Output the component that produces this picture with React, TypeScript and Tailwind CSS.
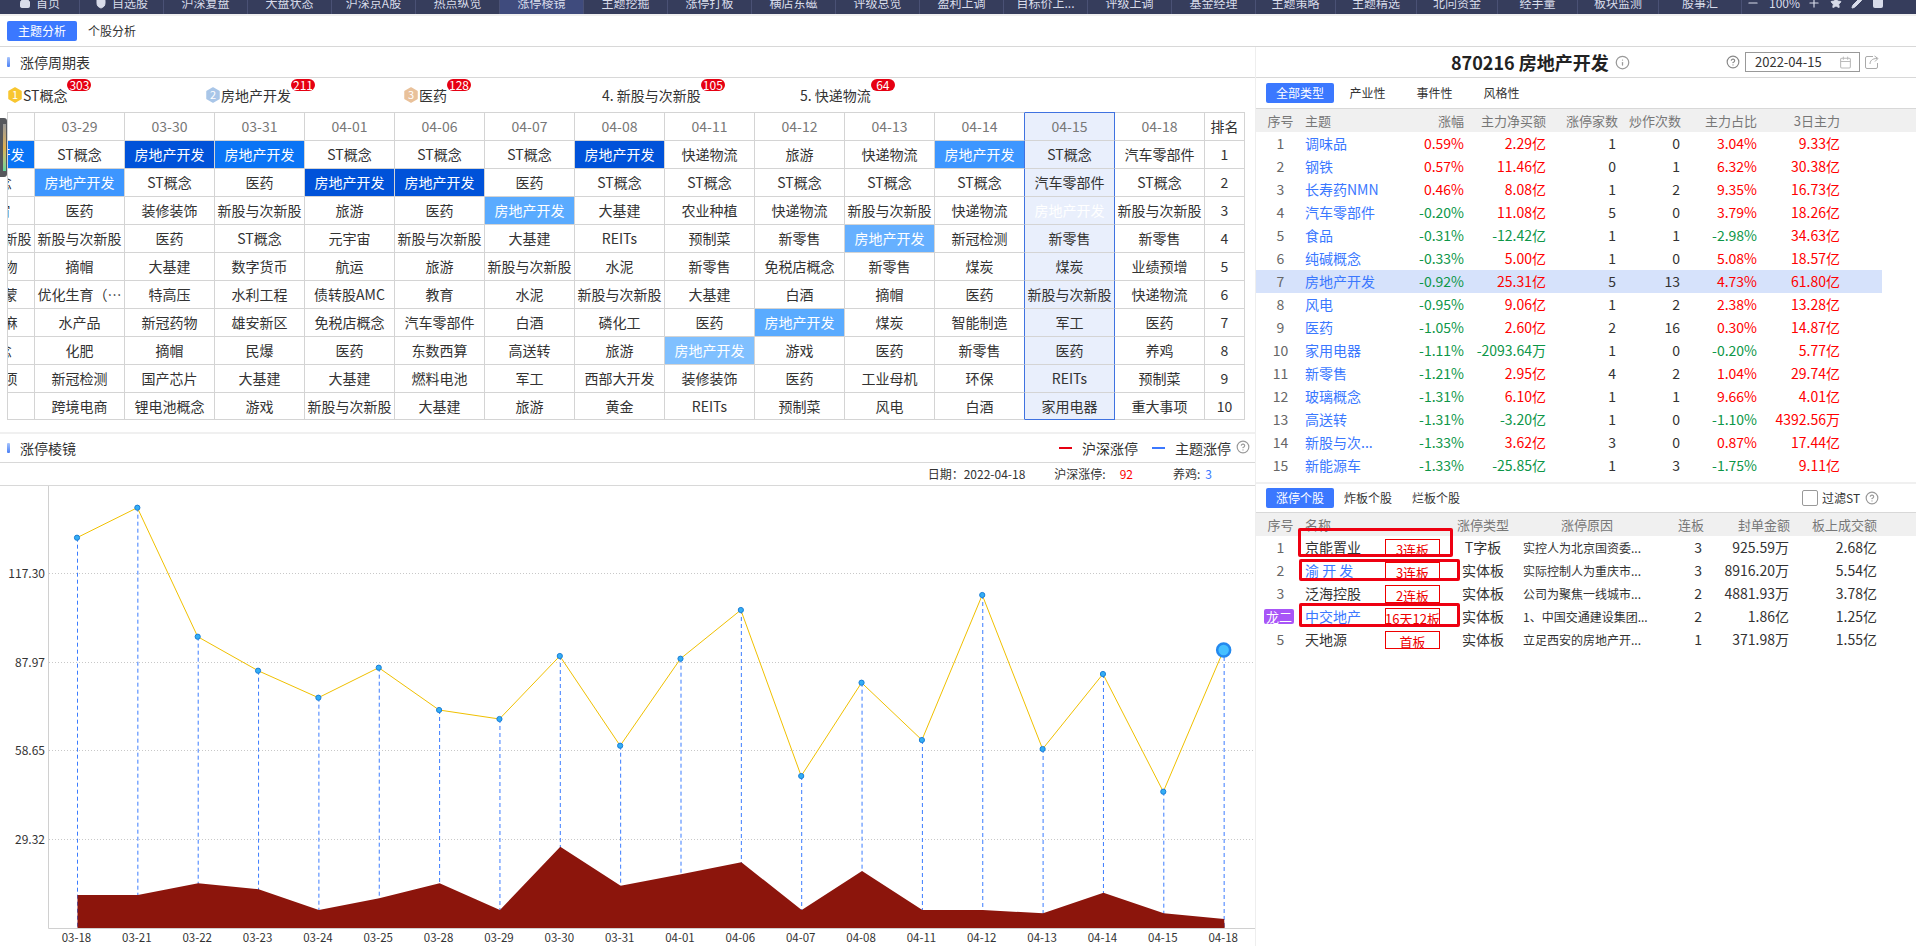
import { Calendar, CircleHelp, Home, Info, Minus, PanelTop, Pencil, Plus, Shield, Star } from "lucide-react";

const navItems = [
  { label: "首页", w: "w-[80px]" },
  { label: "自选股", w: "w-[84px]" },
  { label: "沪深复盘", w: "w-[84px]" },
  { label: "大盘状态", w: "w-[84px]" },
  { label: "沪深京A股", w: "w-[84px]" },
  { label: "热点纵览", w: "w-[84px]" },
  { label: "涨停棱镜", w: "w-[84px]" },
  { label: "主题挖掘", w: "w-[84px]" },
  { label: "涨停打板", w: "w-[84px]" },
  { label: "横店东磁", w: "w-[84px]" },
  { label: "评级总览", w: "w-[84px]" },
  { label: "盈利上调", w: "w-[84px]" },
  { label: "目标价上...", w: "w-[84px]" },
  { label: "评级上调", w: "w-[84px]" },
  { label: "基金经理", w: "w-[84px]" },
  { label: "主题策略", w: "w-[80px]" },
  { label: "主题精选", w: "w-[81px]" },
  { label: "北向资金", w: "w-[81px]" },
  { label: "经手量", w: "w-[80px]" },
  { label: "板块监测", w: "w-[81px]" },
  { label: "股事汇", w: "w-[83px]" },
];

const dates = ["03-28", "03-29", "03-30", "03-31", "04-01", "04-06", "04-07", "04-08", "04-11", "04-12", "04-13", "04-14", "04-15", "04-18"];

const cycle = [
  ["房地产开发", "ST概念", "房地产开发", "房地产开发", "ST概念", "ST概念", "ST概念", "房地产开发", "快递物流", "旅游", "快递物流", "房地产开发", "ST概念", "汽车零部件"],
  ["ST概念", "房地产开发", "ST概念", "医药", "房地产开发", "房地产开发", "医药", "ST概念", "ST概念", "ST概念", "ST概念", "ST概念", "汽车零部件", "ST概念"],
  ["元宇宙", "医药", "装修装饰", "新股与次新股", "旅游", "医药", "房地产开发", "大基建", "农业种植", "快递物流", "新股与次新股", "快递物流", "房地产开发", "新股与次新股"],
  ["新股与次新股", "新股与次新股", "医药", "ST概念", "元宇宙", "新股与次新股", "大基建", "REITs", "预制菜", "新零售", "房地产开发", "新冠检测", "新零售", "新零售"],
  ["新冠药物", "摘帽", "大基建", "数字货币", "航运", "旅游", "新股与次新股", "水泥", "新零售", "免税店概念", "新零售", "煤炭", "煤炭", "业绩预增"],
  ["区域内蒙", "优化生育（…", "特高压", "水利工程", "债转股AMC", "教育", "水泥", "新股与次新股", "大基建", "白酒", "摘帽", "医药", "新股与次新股", "快递物流"],
  ["工业大麻", "水产品", "新冠药物", "雄安新区", "免税店概念", "汽车零部件", "白酒", "磷化工", "医药", "房地产开发", "煤炭", "智能制造", "军工", "医药"],
  ["ST概念", "化肥", "摘帽", "民爆", "医药", "东数西算", "高送转", "旅游", "房地产开发", "游戏", "医药", "新零售", "医药", "养鸡"],
  ["重大事项", "新冠检测", "国产芯片", "大基建", "大基建", "燃料电池", "军工", "西部大开发", "装修装饰", "医药", "工业母机", "环保", "REITs", "预制菜"],
  ["", "跨境电商", "锂电池概念", "游戏", "新股与次新股", "大基建", "旅游", "黄金", "REITs", "预制菜", "风电", "白酒", "家用电器", "重大事项"],
];

// row-col -> heat colour of the 房地产开发 cell
const heat: Record<string, string> = {
  "0-0": "bg-[#0a74f5] text-white",
  "1-1": "bg-[#3d96ff] text-white",
  "0-2": "bg-[#0052d9] text-white",
  "0-3": "bg-[#0a74f5] text-white",
  "1-4": "bg-[#0052d9] text-white",
  "1-5": "bg-[#0052d9] text-white",
  "2-6": "bg-[#5aabff] text-white",
  "0-7": "bg-[#0052d9] text-white",
  "7-8": "bg-[#80c0ff] text-white",
  "6-9": "bg-[#5aabff] text-white",
  "3-10": "bg-[#66b0ff] text-white",
  "0-11": "bg-[#3d96ff] text-white",
  "2-12": "bg-[#5aabff] text-white",
};

const legend = [
  { medal: "#f8c630", n: "1", name: "ST概念", count: "303" },
  { medal: "#a9c6e8", n: "2", name: "房地产开发", count: "211" },
  { medal: "#e9c19a", n: "3", name: "医药", count: "128" },
  { name: "4. 新股与次新股", count: "105" },
  { name: "5. 快递物流", count: "64" },
];

type Theme = [string, string, string, string, string, string, string];

const themes: Theme[] = [
  ["调味品", "0.59%", "2.29亿", "1", "0", "3.04%", "9.33亿"],
  ["钢铁", "0.57%", "11.46亿", "0", "1", "6.32%", "30.38亿"],
  ["长寿药NMN", "0.46%", "8.08亿", "1", "2", "9.35%", "16.73亿"],
  ["汽车零部件", "-0.20%", "11.08亿", "5", "0", "3.79%", "18.26亿"],
  ["食品", "-0.31%", "-12.42亿", "1", "1", "-2.98%", "34.63亿"],
  ["纯碱概念", "-0.33%", "5.00亿", "1", "0", "5.08%", "18.57亿"],
  ["房地产开发", "-0.92%", "25.31亿", "5", "13", "4.73%", "61.80亿"],
  ["风电", "-0.95%", "9.06亿", "1", "2", "2.38%", "13.28亿"],
  ["医药", "-1.05%", "2.60亿", "2", "16", "0.30%", "14.87亿"],
  ["家用电器", "-1.11%", "-2093.64万", "1", "0", "-0.20%", "5.77亿"],
  ["新零售", "-1.21%", "2.95亿", "4", "2", "1.04%", "29.74亿"],
  ["玻璃概念", "-1.31%", "6.10亿", "1", "1", "9.66%", "4.01亿"],
  ["高送转", "-1.31%", "-3.20亿", "1", "0", "-1.10%", "4392.56万"],
  ["新股与次...", "-1.33%", "3.62亿", "3", "0", "0.87%", "17.44亿"],
  ["新能源车", "-1.33%", "-25.85亿", "1", "3", "-1.75%", "9.11亿"],
];

const stocks = [
  { no: "1", name: "京能置业", badge: "3连板", type: "T字板", reason: "实控人为北京国资委...", days: "3", seal: "925.59万", vol: "2.68亿" },
  { no: "2", name: "渝 开 发", blue: true, badge: "3连板", type: "实体板", reason: "实际控制人为重庆市...", days: "3", seal: "8916.20万", vol: "5.54亿" },
  { no: "3", name: "泛海控股", badge: "2连板", type: "实体板", reason: "公司为聚焦一线城市...", days: "2", seal: "4881.93万", vol: "3.78亿" },
  { no: "龙二", name: "中交地产", blue: true, badge: "16天12板", type: "实体板", reason: "1、中国交通建设集团...", days: "2", seal: "1.86亿", vol: "1.25亿" },
  { no: "5", name: "天地源", badge: "首板", type: "实体板", reason: "立足西安的房地产开...", days: "1", seal: "371.98万", vol: "1.55亿" },
];

// chart points in page pixels
const linePts = [537.7, 507.7, 636.7, 670.7, 697.7, 667.7, 710, 719, 656, 745.7, 658.7, 610, 776, 682.7, 740, 595, 749, 674, 791.7, 650];
const areaPts = [895, 895, 883.3, 889.3, 910, 898.3, 883.3, 910, 846.7, 885.7, 874.3, 862.3, 910, 871, 910, 910, 913.3, 892.7, 913.3, 919];
const xLabels = ["03-18", "03-21", "03-22", "03-23", "03-24", "03-25", "03-28", "03-29", "03-30", "03-31", "04-01", "04-06", "04-07", "04-08", "04-11", "04-12", "04-13", "04-14", "04-15", "04-18"];
const yTicks = [
  { y: 573.5, label: "117.30" },
  { y: 662.5, label: "87.97" },
  { y: 750.5, label: "58.65" },
  { y: 839.5, label: "29.32" },
];
const TOP = 486;
const px = (i: number) => 77 + 60.35 * i;

const pctColor = (v: string) => (v.startsWith("-") ? "text-[#0d9648]" : "text-[#ff0000]");

function Medal({ color, n }: { color: string; n: string }) {
  return (
    <svg width="14" height="16" viewBox="0 0 14 16" className="mr-[1px] shrink-0">
      <path d="M7 1 L13 4.5 L13 11.5 L7 15 L1 11.5 L1 4.5 Z" fill={color} stroke={color} strokeWidth="1.5" strokeLinejoin="round" />
      <text x="7" y="12" textAnchor="middle" fontSize="11" fill="#fff">
        {n}
      </text>
    </svg>
  );
}

function SectionTitle({ title }: { title: string }) {
  return (
    <div className="flex items-center">
      <span className="ml-[7px] h-[10px] w-[3px] rounded-[1px] bg-linear-to-b from-[#a9c4fb] to-[#4a7ff5]" />
      <span className="ml-[10px] text-[14px] text-[#333]">{title}</span>
    </div>
  );
}

function ChartPanel() {
  const line = linePts.map((y, i) => `${px(i)},${y - TOP}`).join(" ");
  const area = `${px(0) + 0.5},${928 - TOP} ` + areaPts.map((y, i) => `${px(i) + 0.5},${y - TOP}`).join(" ") + ` ${px(19) + 1},${928 - TOP}`;
  return (
    <svg width="1255" height="460" className="block">
      <path d={`M48.5 0 V${928.5 - TOP} H1255`} fill="none" stroke="#d0d0d0" />
      {yTicks.map((t) => (
        <g key={t.label}>
          <line x1="49" x2="1255" y1={t.y - TOP} y2={t.y - TOP} stroke="#c8c8c8" strokeDasharray="1 2" />
          <text x="45" y={t.y - TOP + 4} textAnchor="end" fontSize="12" fill="#333">
            {t.label}
          </text>
        </g>
      ))}
      {linePts.map((y, i) => (
        <line key={i} x1={px(i) + 0.5} x2={px(i) + 0.5} y1={y - TOP} y2={928 - TOP} stroke="#3b7cff" strokeDasharray="4 3" />
      ))}
      <polygon points={area} fill="#8c150c" />
      <polyline points={line} fill="none" stroke="#f0c000" />
      {linePts.slice(0, 19).map((y, i) => (
        <circle key={i} cx={px(i)} cy={y - TOP} r="2.6" fill="#33aef5" stroke="#1c7ed6" />
      ))}
      <circle cx={px(19)} cy={650 - TOP} r="6.5" fill="#45c0ff" stroke="#2489ef" strokeWidth="2.5" />
      {xLabels.map((d, i) => (
        <text key={d} x={px(i) - 0.5} y={942 - TOP} textAnchor="middle" fontSize="11.5" fill="#333">
          {d}
        </text>
      ))}
    </svg>
  );
}

export default function App() {
  return (
    <div className="relative h-[946px] w-[1916px] overflow-hidden bg-white font-['Noto_Sans_CJK_SC','Noto_Sans',sans-serif] text-[#333]">
      {/* top nav, page is scrolled so only the lower half shows */}
      <div className="h-[14px] overflow-hidden bg-[#363d5c]">
        <div className="-mt-[11px] flex h-[28px] items-center text-[12px] text-[#d8dcea]">
          {navItems.map((item, i) => (
            <div key={item.label} className={`flex h-full shrink-0 items-center justify-center gap-[5px] border-r border-[#4a5175] ${item.w} ${i === 6 ? "bg-[#3f4b7d]" : ""}`}>
              {i === 0 && <Home size={12} fill="#d8dcea" />}
              {i === 1 && <Shield size={12} fill="#d8dcea" />}
              {item.label}
            </div>
          ))}
          <div className="flex items-center pl-[4px] text-[#d8dcea]">
            <Minus size={14} />
            <span className="ml-[9px] text-[12px]">100%</span>
            <Plus size={14} className="ml-[7px]" />
            <Star size={12} fill="#d8dcea" className="ml-[9px]" />
            <Pencil size={12} fill="#d8dcea" className="ml-[9px]" />
            <PanelTop size={12} fill="#d8dcea" className="ml-[9px]" />
          </div>
        </div>
      </div>
      <div className="h-[2px] bg-[#f0f0f0]" />

      <div className="flex h-[31px] items-center gap-[11px] border-b border-[#d8d8d8] pl-[7px] text-[12px]">
        <div className="flex h-[20px] w-[70px] items-center justify-center rounded-[2px] bg-[#3b78ff] text-white">主题分析</div>
        <div>个股分析</div>
      </div>

      <div className="flex">
        {/* left column */}
        <div className="w-[1256px] shrink-0 border-r border-[#eeeeee]">
          <div className="flex h-[31px] items-center border-b border-[#d8d8d8]">
            <SectionTitle title="涨停周期表" />
          </div>
          <div className="flex h-[34px] items-center pl-[8px] text-[14px]">
            {legend.map((l) => (
              <div key={l.name} className="flex w-[198px] shrink-0 items-center">
                <div className="relative flex items-center leading-[20px]">
                  {l.medal && <Medal color={l.medal} n={l.n ?? ""} />}
                  <span>{l.name}</span>
                  <span className="absolute -top-[6px] left-full flex h-[12px] min-w-[24px] items-center justify-center rounded-[6px] bg-[#e60012] px-[1px] text-[12px] text-white">
                    {l.count}
                  </span>
                </div>
              </div>
            ))}
          </div>

          <div className="ml-[7px] w-[1238px] overflow-hidden border-l border-[#d4d4d4]">
            <table className="-ml-[63px] w-[1300px] table-fixed border-separate border-spacing-0 text-center text-[14px]">
              <colgroup>
                {dates.map((d) => (
                  <col key={d} className="w-[90px]" />
                ))}
                <col className="w-[40px]" />
              </colgroup>
              <thead>
                <tr>
                  {dates.map((d, c) => (
                    <th
                      key={d}
                      className={`h-[29px] border-t border-r border-b border-[#d4d4d4] text-[14px] font-normal text-[#777] ${c === 12 ? "border-t-[#3f72e0] border-r-[#3f72e0] bg-[#e9effc]" : ""} ${c === 11 ? "border-r-[#3f72e0]" : ""}`}
                    >
                      {d}
                    </th>
                  ))}
                  <th className="border-t border-r border-b border-[#d4d4d4] font-normal">排名</th>
                </tr>
              </thead>
              <tbody>
                {cycle.map((row, r) => (
                  <tr key={r} className={r === 9 ? "h-[27px]" : "h-[28px]"}>
                    {row.map((name, c) => (
                      <td
                        key={c}
                        className={`overflow-hidden border-r border-b border-[#d4d4d4] whitespace-nowrap ${c === 12 ? "border-r-[#3f72e0] bg-[#e9effc]" : ""} ${c === 11 ? "border-r-[#3f72e0]" : ""} ${c === 12 && r === 9 ? "border-b-[#3f72e0]" : ""} ${heat[`${r}-${c}`] ?? ""}`}
                      >
                        {name}
                      </td>
                    ))}
                    <td className="border-r border-b border-[#d4d4d4]">{r + 1}</td>
                  </tr>
                ))}
              </tbody>
            </table>
          </div>

          <div className="mt-[12px] h-[2px] bg-[#f0f0f0]" />

          <div className="flex h-[29px] items-center justify-between border-b border-[#d8d8d8]">
            <SectionTitle title="涨停棱镜" />
            <div className="flex items-center pr-[5px] text-[14px]">
              <span className="h-[2px] w-[13px] bg-[#e60012]" />
              <span className="ml-[10px]">沪深涨停</span>
              <span className="ml-[14px] h-[2px] w-[13px] bg-[#3b78ff]" />
              <span className="ml-[10px]">主题涨停</span>
              <CircleHelp size={14} className="mb-[2px] ml-[5px] text-[#999]" />
            </div>
          </div>
          <div className="flex h-[23px] items-center justify-end border-b border-[#d8d8d8] pr-[43px] text-[12px]">
            <span>日期：2022-04-18</span>
            <span className="ml-[29px]">沪深涨停:</span>
            <span className="ml-[14px] text-[#ff0000]">92</span>
            <span className="ml-[40px]">养鸡:</span>
            <span className="ml-[5px] text-[#3b78ff]">3</span>
          </div>
          <ChartPanel />
        </div>

        {/* right column */}
        <div className="w-[660px] shrink-0">
          <div className="flex h-[31px] items-center border-b border-[#d8d8d8] pl-[195px] pr-[36px]">
            <span className="text-[18px] font-bold text-[#222]">870216 房地产开发</span>
            <Info size={15} className="ml-[6px] text-[#999]" />
            <CircleHelp size={14} className="ml-auto text-[#888]" />
            <div className="ml-[5px] flex h-[20px] w-[115px] items-center justify-between border border-[#999] pr-[7px] pl-[9px] text-[13px]">
              <span>2022-04-15</span>
              <Calendar size={13} className="text-[#bbb]" />
            </div>
            <svg width="16" height="16" viewBox="0 0 16 16" fill="none" stroke="#aaa" className="ml-[4px]">
              <path d="M9 2.5 H3 a1.5 1.5 0 0 0 -1.5 1.5 v9 a1.5 1.5 0 0 0 1.5 1.5 h9 a1.5 1.5 0 0 0 1.5 -1.5 v-4" />
              <path d="M6 10 c0 -3 2 -5.5 7 -5.5 M10.5 2 L14 4.5 L11 7.5" />
            </svg>
          </div>

          <div className="flex h-[31px] items-center border-b border-[#d8d8d8] pl-[10px] text-[12px]">
            <div className="flex h-[20px] w-[68px] items-center justify-center rounded-[2px] bg-[#3b78ff] text-white">全部类型</div>
            <div className="w-[67px] text-center">产业性</div>
            <div className="w-[67px] text-center">事件性</div>
            <div className="w-[67px] text-center">风格性</div>
          </div>

          <div className="w-[660px]">
            <div className="grid h-[23px] grid-cols-[49px_90px_69px_82px_72px_63px_76px_83px_76px] items-center bg-[#f0f0f0] text-[13px] whitespace-nowrap text-[#777]">
              <span className="text-center">序号</span>
              <span>主题</span>
              <span className="text-right">涨幅</span>
              <span className="text-right">主力净买额</span>
              <span className="text-right">涨停家数</span>
              <span className="text-right">炒作次数</span>
              <span className="text-right">主力占比</span>
              <span className="text-right">3日主力</span>
            </div>
            {themes.map((t, i) => (
              <div key={t[0]} className={`grid h-[23px] w-[626px] grid-cols-[49px_90px_69px_82px_72px_63px_76px_83px_42px] items-center text-[14px] whitespace-nowrap ${i === 6 ? "bg-[#d6e2fb]" : ""}`}>
                <span className="text-center text-[#666]">{i + 1}</span>
                <span className="text-[#3b78ff]">{t[0]}</span>
                <span className={`text-right ${pctColor(t[1])}`}>{t[1]}</span>
                <span className={`text-right ${pctColor(t[2])}`}>{t[2]}</span>
                <span className="pr-[2px] text-right">{t[3]}</span>
                <span className="pr-[1px] text-right">{t[4]}</span>
                <span className={`text-right ${pctColor(t[5])}`}>{t[5]}</span>
                <span className={`text-right ${pctColor(t[6])}`}>{t[6]}</span>
              </div>
            ))}
          </div>

          <div className="mt-[5px] h-[2px] bg-[#f0f0f0]" />
          <div className="flex h-[29px] items-center border-b border-[#d8d8d8] pl-[10px] text-[12px]">
            <div className="flex h-[20px] w-[68px] items-center justify-center rounded-[2px] bg-[#3b78ff] text-white">涨停个股</div>
            <div className="w-[68px] text-center">炸板个股</div>
            <div className="w-[68px] text-center">烂板个股</div>
            <span className="ml-[332px] h-[16px] w-[16px] rounded-[2px] border border-[#999]" />
            <span className="ml-[4px]">过滤ST</span>
            <CircleHelp size={14} className="ml-[5px] text-[#999]" />
          </div>

          <div className="grid h-[23px] grid-cols-[49px_80px_60px_76px_139px_44px_86px_87px_39px] items-center bg-[#f0f0f0] text-[13px] whitespace-nowrap text-[#777]">
            <span className="text-center">序号</span>
            <span>名称</span>
            <span />
            <span className="text-center">涨停类型</span>
            <span className="pr-[7px] text-center">涨停原因</span>
            <span className="text-right">连板</span>
            <span className="text-right">封单金额</span>
            <span className="text-right">板上成交额</span>
          </div>
          {stocks.map((s) => (
            <div key={s.name} className="grid h-[23px] grid-cols-[49px_80px_60px_76px_139px_44px_86px_87px_39px] items-center text-[14px] whitespace-nowrap">
              <span className="text-center text-[#666]">
                {s.no === "龙二" ? (
                  <span className="ml-[8px] flex h-[15px] w-[30px] items-center justify-center rounded-[2px] bg-[#a855f7] text-[13px] text-white">龙二</span>
                ) : (
                  s.no
                )}
              </span>
              <span className={s.blue ? "text-[#3b78ff]" : ""}>{s.name}</span>
              <span className="flex h-[18px] w-[55px] items-start justify-center overflow-visible border border-[#ee0000] text-[13px] leading-[20px] text-[#ee0000]">{s.badge}</span>
              <span className="text-center">{s.type}</span>
              <span className="pl-[2px] text-[12px]">{s.reason}</span>
              <span className="pr-[2px] text-right">{s.days}</span>
              <span className="pr-[1px] text-right">{s.seal}</span>
              <span className="text-right">{s.vol}</span>
            </div>
          ))}
        </div>
      </div>

      {/* red marker boxes drawn over the stock list */}
      <div className="absolute top-[528px] left-[1298px] h-[29px] w-[155px] rounded-[2px] border-[3px] border-[#ee0011]" />
      <div className="absolute top-[559px] left-[1299px] h-[22px] w-[161px] rounded-[2px] border-[3px] border-[#ee0011]" />
      <div className="absolute top-[603px] left-[1299px] h-[24px] w-[161px] rounded-[2px] border-[3px] border-[#ee0011]" />

      {/* floating page widget on the left edge */}
      <div className="absolute top-[118px] left-0 flex h-[59px] w-[7px] justify-end rounded-r-[3px] bg-[#55575c] py-[6px] pr-[1px]">
        <div className="h-full w-[3px] bg-linear-to-b from-[#999] via-[#e0b04a] to-[#5cd6a0]" />
      </div>
    </div>
  );
}
